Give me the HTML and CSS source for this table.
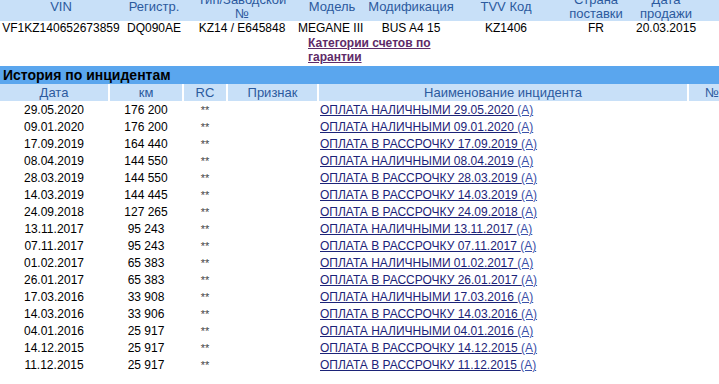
FILE: index.html
```html
<!DOCTYPE html>
<html lang="ru">
<head>
<meta charset="utf-8">
<title>История по инцидентам</title>
<link rel="stylesheet" href="styles.css">
</head>
<body>
<div class="page">
  <div class="vehicle">
    <div class="vrow vhead">
      <div class="c-vin">VIN</div>
      <div>Регистр.</div>
      <div>Тип/Заводской<br>№</div>
      <div>Модель</div>
      <div>Модификация</div>
      <div>TVV Код</div>
      <div>Страна<br>поставки</div>
      <div>Дата<br>продажи</div>
      <div></div>
    </div>
    <div class="vrow vdata">
      <div>VF1KZ140652673859</div>
      <div>DQ090AE</div>
      <div>KZ14 / E645848</div>
      <div class="left">MEGANE III</div>
      <div>BUS A4 15</div>
      <div>KZ1406</div>
      <div>FR</div>
      <div>20.03.2015</div>
      <div></div>
    </div>
    <div class="warranty"><a href="#" class="cat-link">Категории счетов по гарантии</a></div>
  </div>

  <div class="section-title">История по инцидентам</div>

  <div class="incidents">
    <div class="irow ihead">
      <div>Дата</div>
      <div>км</div>
      <div>RC</div>
      <div>Признак</div>
      <div>Наименование инцидента</div>
      <div>№</div>
    </div>
    <div class="irow"><div>29.05.2020</div><div>176 200</div><div class="rc">**</div><div></div><div class="name"><a href="#" class="inc">ОПЛАТА НАЛИЧНЫМИ 29.05.2020 </a><a href="#" class="inc-a">(А)</a></div><div></div></div>
    <div class="irow"><div>09.01.2020</div><div>176 200</div><div class="rc">**</div><div></div><div class="name"><a href="#" class="inc">ОПЛАТА НАЛИЧНЫМИ 09.01.2020 </a><a href="#" class="inc-a">(А)</a></div><div></div></div>
    <div class="irow"><div>17.09.2019</div><div>164 440</div><div class="rc">**</div><div></div><div class="name"><a href="#" class="inc">ОПЛАТА В РАССРОЧКУ 17.09.2019 </a><a href="#" class="inc-a">(А)</a></div><div></div></div>
    <div class="irow"><div>08.04.2019</div><div>144 550</div><div class="rc">**</div><div></div><div class="name"><a href="#" class="inc">ОПЛАТА НАЛИЧНЫМИ 08.04.2019 </a><a href="#" class="inc-a">(А)</a></div><div></div></div>
    <div class="irow"><div>28.03.2019</div><div>144 550</div><div class="rc">**</div><div></div><div class="name"><a href="#" class="inc">ОПЛАТА В РАССРОЧКУ 28.03.2019 </a><a href="#" class="inc-a">(А)</a></div><div></div></div>
    <div class="irow"><div>14.03.2019</div><div>144 445</div><div class="rc">**</div><div></div><div class="name"><a href="#" class="inc">ОПЛАТА В РАССРОЧКУ 14.03.2019 </a><a href="#" class="inc-a">(А)</a></div><div></div></div>
    <div class="irow"><div>24.09.2018</div><div>127 265</div><div class="rc">**</div><div></div><div class="name"><a href="#" class="inc">ОПЛАТА В РАССРОЧКУ 24.09.2018 </a><a href="#" class="inc-a">(А)</a></div><div></div></div>
    <div class="irow"><div>13.11.2017</div><div>95 243</div><div class="rc">**</div><div></div><div class="name"><a href="#" class="inc">ОПЛАТА НАЛИЧНЫМИ 13.11.2017 </a><a href="#" class="inc-a">(А)</a></div><div></div></div>
    <div class="irow"><div>07.11.2017</div><div>95 243</div><div class="rc">**</div><div></div><div class="name"><a href="#" class="inc">ОПЛАТА В РАССРОЧКУ 07.11.2017 </a><a href="#" class="inc-a">(А)</a></div><div></div></div>
    <div class="irow"><div>01.02.2017</div><div>65 383</div><div class="rc">**</div><div></div><div class="name"><a href="#" class="inc">ОПЛАТА НАЛИЧНЫМИ 01.02.2017 </a><a href="#" class="inc-a">(А)</a></div><div></div></div>
    <div class="irow"><div>26.01.2017</div><div>65 383</div><div class="rc">**</div><div></div><div class="name"><a href="#" class="inc">ОПЛАТА В РАССРОЧКУ 26.01.2017 </a><a href="#" class="inc-a">(А)</a></div><div></div></div>
    <div class="irow"><div>17.03.2016</div><div>33 908</div><div class="rc">**</div><div></div><div class="name"><a href="#" class="inc">ОПЛАТА НАЛИЧНЫМИ 17.03.2016 </a><a href="#" class="inc-a">(А)</a></div><div></div></div>
    <div class="irow"><div>14.03.2016</div><div>33 906</div><div class="rc">**</div><div></div><div class="name"><a href="#" class="inc">ОПЛАТА В РАССРОЧКУ 14.03.2016 </a><a href="#" class="inc-a">(А)</a></div><div></div></div>
    <div class="irow"><div>04.01.2016</div><div>25 917</div><div class="rc">**</div><div></div><div class="name"><a href="#" class="inc">ОПЛАТА НАЛИЧНЫМИ 04.01.2016 </a><a href="#" class="inc-a">(А)</a></div><div></div></div>
    <div class="irow"><div>14.12.2015</div><div>25 917</div><div class="rc">**</div><div></div><div class="name"><a href="#" class="inc">ОПЛАТА В РАССРОЧКУ 14.12.2015 </a><a href="#" class="inc-a">(А)</a></div><div></div></div>
    <div class="irow"><div>11.12.2015</div><div>25 917</div><div class="rc">**</div><div></div><div class="name"><a href="#" class="inc">ОПЛАТА В РАССРОЧКУ 11.12.2015 </a><a href="#" class="inc-a">(А)</a></div><div></div></div>
  </div>
</div>
</body>
</html>
```

FILE: styles.css
```css
html, body {
  margin: 0;
  padding: 0;
  background: #ffffff;
  overflow: hidden;
}

body {
  font-family: "Liberation Sans", Arial, sans-serif;
  font-size: 12px;
  color: #000000;
}

.page {
  width: 760px;
  margin-top: -7px;
}

/* Vehicle summary */
.vrow {
  display: grid;
  grid-template-columns: 122px 64px 112px 68px 90px 100px 80px 60px 1fr;
  width: 719px;
}

.vrow > div {
  text-align: center;
  white-space: nowrap;
}

.vhead {
  background: #c8e0f8;
  color: #2c5a9e;
  font-size: 13px;
  line-height: 14px;
  height: 28px;
  align-items: center;
}

.vdata {
  height: 13px;
  line-height: 13px;
  padding-top: 1px;
}

.vdata > div.left {
  text-align: left;
}

.warranty {
  padding-left: 308px;
  width: 150px;
  line-height: 14px;
  padding-top: 1px;
  height: 30px;
}

.cat-link {
  color: #5e2a68;
  font-weight: bold;
  font-size: 12px;
  text-decoration: underline;
}

/* Section */
.section-title {
  background: #5aa6ee;
  color: #000;
  font-weight: bold;
  font-size: 14px;
  line-height: 18px;
  height: 18px;
  padding-left: 3px;
}

/* Incidents */
.incidents {
  width: 760px;
}

.irow {
  display: grid;
  grid-template-columns: 108px 72px 42px 89px 368px 46px;
  column-gap: 2px;
  height: 17px;
  line-height: 17px;
}

.irow > div {
  text-align: center;
  white-space: nowrap;
}

.ihead {
  font-size: 13px;
  color: #2c5a9e;
  margin-bottom: 1px;
}

.ihead > div {
  background: #c8e0f8;
}

.irow .rc {
  font-size: 11px;
  color: #444;
}

.irow .name {
  text-align: left;
  padding-left: 1px;
}

.inc {
  color: #1c2378;
  text-decoration: underline;
}

.inc-a {
  color: #3a4fa8;
  text-decoration: underline;
}
```
